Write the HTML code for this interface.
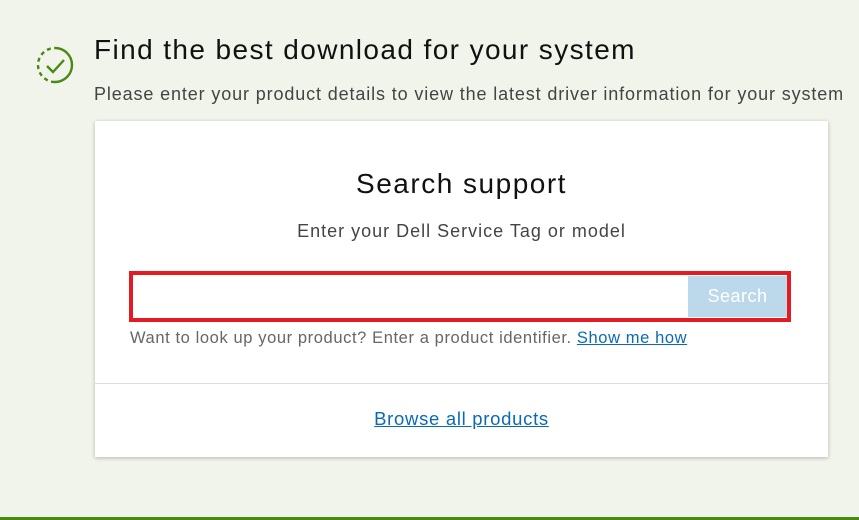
<!DOCTYPE html>
<html><head><style>
html,body{margin:0;padding:0;}
body{width:859px;height:520px;background:#f1f4eb;position:relative;overflow:hidden;font-family:"Liberation Sans",sans-serif;}
.abs{position:absolute;}
h1{position:absolute;left:94px;top:34px;margin:0;font-size:28px;font-weight:normal;color:#111;white-space:nowrap;letter-spacing:1.4px}
.sub{left:94px;top:84px;font-size:18px;color:#444;white-space:nowrap;letter-spacing:0.87px}
.card{left:95px;top:121px;width:733px;height:336px;background:#fff;box-shadow:0 1px 4px rgba(0,0,0,0.25);}
.t2{left:0;width:733px;text-align:center;}
.red{left:129px;top:271px;width:654px;height:43px;border:4px solid #e31b23;background:#fff}
.btn{left:555px;top:1px;width:99px;height:41px;background:#bcd9ec;color:#fff;font-size:18px;text-align:center;line-height:41px;letter-spacing:0.5px}
a{color:#0b6ab5;text-decoration:underline}
</style></head><body>
<svg class="abs" style="left:35px;top:45px" width="40" height="40" viewBox="0 0 40 40">
<path d="M20 3 A17 17 0 0 1 20 37" fill="none" stroke="#4a8a12" stroke-width="2.4"/>
<path d="M20 37 A17 17 0 0 1 20 3" fill="none" stroke="#4a8a12" stroke-width="2.4" stroke-dasharray="4 3.5"/>
<path d="M12 21 L18 27 L29 15" fill="none" stroke="#4a8a12" stroke-width="2.4"/>
</svg>
<h1>Find the best download for your system</h1>
<div class="abs sub">Please enter your product details to view the latest driver information for your system</div>
<div class="abs card">
  <div class="abs t2" style="top:47px;font-size:28px;color:#111;letter-spacing:1.5px">Search support</div>
  <div class="abs t2" style="top:100px;font-size:18px;color:#444;letter-spacing:1px">Enter your Dell Service Tag or model</div>
  <div class="abs" style="left:35px;top:208px;font-size:16.5px;color:#666;white-space:nowrap;letter-spacing:0.6px">Want to look up your product? Enter a product identifier. <a>Show me how</a></div>
  <div class="abs" style="left:0;top:262px;width:733px;height:1px;background:#ddd"></div>
  <div class="abs t2" style="top:287px;font-size:18.5px;letter-spacing:0.7px"><a>Browse all products</a></div>
</div>
<div class="abs red"><div class="abs btn">Search</div></div>
<div class="abs" style="left:0;top:517px;width:859px;height:3px;background:#4a8a12"></div>
</body></html>
